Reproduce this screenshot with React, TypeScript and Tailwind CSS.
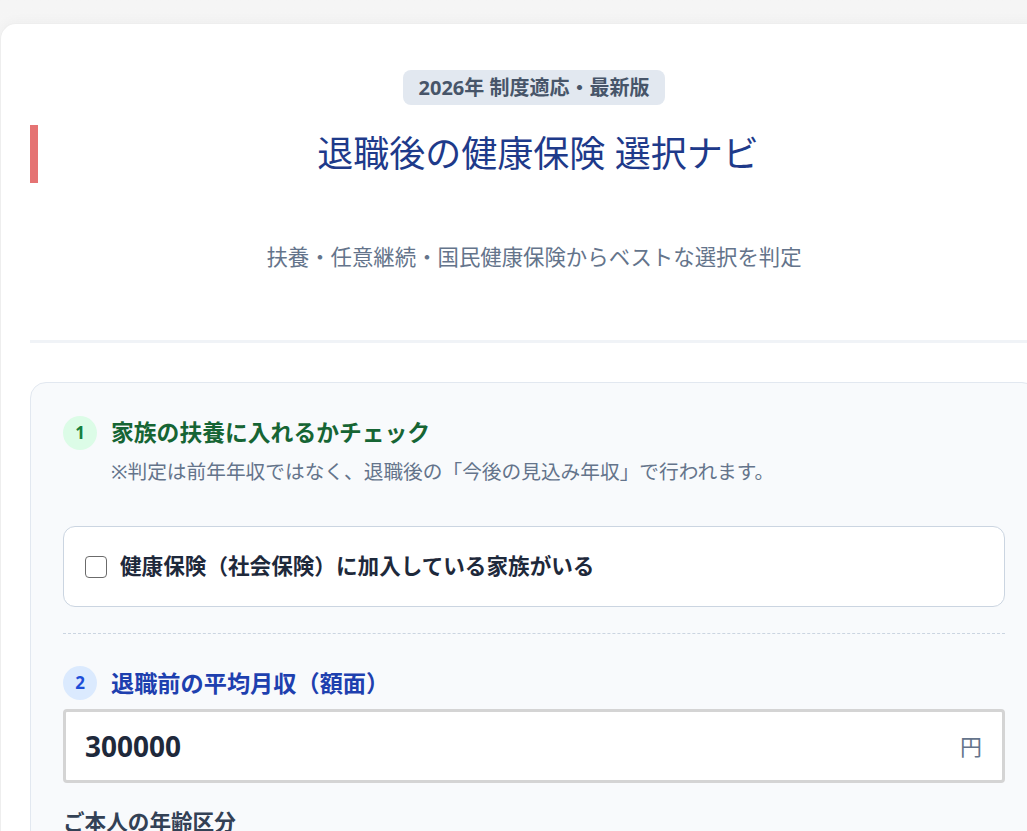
export default function App() {
  return (
    <div
      className="w-full h-[831px] overflow-hidden bg-gradient-to-b from-[#f5f5f5] to-[#fcfcfc]"
      style={{ fontFamily: '"Noto Sans", "Noto Sans CJK JP", sans-serif' }}
    >
      <div className="mt-[23px] w-[1067px] rounded-tl-2xl rounded-tr-2xl bg-white border-t border-l border-[#eeeeee] shadow-[0_-2px_12px_rgba(0,0,0,0.03)] px-[29px] pt-[46px] pb-10">
        {/* header */}
        <header className="flex flex-col items-center border-b-[3px] border-[#f0f3f7] pb-[67px] text-center">
          <span className="inline-flex h-[35px] items-center rounded-lg bg-[#e2e8f0] px-4 text-[20px] font-bold text-[#475569]">
            2026年 制度適応・最新版
          </span>
          <h1 className="mt-[20px] self-stretch border-l-[8px] border-[#e57373] text-[36px] leading-[58px] font-normal text-[#1e3a8a]">
            退職後の健康保険 選択ナビ
          </h1>
          <p className="mt-[58px] text-[21.4px] leading-[32px] text-[#64748b]">
            扶養・任意継続・国民健康保険からベストな選択を判定
          </p>
        </header>

        {/* step section */}
        <section className="mt-[39px] rounded-2xl border border-[#e2e8f0] bg-[#f8fafc] px-[32px] pt-[33px] pb-10">
          <div className="flex items-center gap-[14px]">
            <span className="flex h-[34px] w-[34px] items-center justify-center rounded-full bg-[#dcfce7] text-[17px] font-bold text-[#15803d]">
              1
            </span>
            <h2 className="text-[22.8px] leading-[34px] font-bold text-[#166534]">家族の扶養に入れるかチェック</h2>
          </div>
          <p className="mt-[9px] ml-[48px] text-[19.7px] leading-[26px] text-[#64748b]">
            ※判定は前年年収ではなく、退職後の「今後の見込み年収」で行われます。
          </p>

          <label className="mt-[41px] flex h-[81px] items-center gap-[13px] rounded-xl border border-[#cbd5e1] bg-white px-[21px]">
            <span className="h-[22px] w-[22px] rounded-[4px] border-[1.5px] border-[#6b6b6b] bg-white" />
            <span className="text-[21.6px] font-bold text-[#1e293b]">健康保険（社会保険）に加入している家族がいる</span>
          </label>

          <div className="mt-[26px] border-t border-dashed border-[#cbd5e1]" />

          <div className="mt-[32px] flex items-center gap-[14px]">
            <span className="flex h-[34px] w-[34px] items-center justify-center rounded-full bg-[#dbeafe] text-[17px] font-bold text-[#1d4ed8]">
              2
            </span>
            <h2 className="text-[23.2px] leading-[34px] font-bold text-[#1e40af]">退職前の平均月収（額面）</h2>
          </div>

          <div className="mt-[9px] flex h-[74px] items-center justify-between rounded-[4px] border-[3px] border-[#d4d4d4] bg-white pl-[19px] pr-[20px]">
            <span className="text-[28px] font-bold text-[#1e293b]">300000</span>
            <span className="text-[22px] text-[#64748b]">円</span>
          </div>

          <p className="mt-[24px] text-[21.6px] leading-[30px] font-bold text-[#334155]">ご本人の年齢区分</p>
        </section>
      </div>
    </div>
  );
}
